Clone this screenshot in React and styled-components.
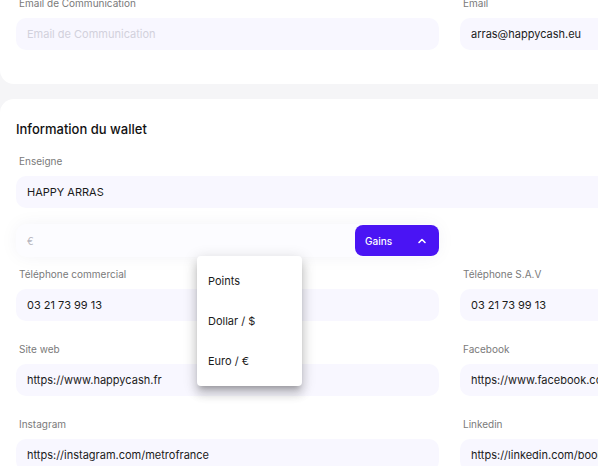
import styled, { createGlobalStyle } from "styled-components";

const GlobalStyle = createGlobalStyle`
  body {
    margin: 0;
    background: #f5f5f7;
    font-family: "Inter", "Liberation Sans", sans-serif;
    overflow: hidden;
  }
`;

const Page = styled.div`
  display: flex;
  flex-direction: column;
  gap: 15px;
  width: 900px;
  margin-top: -24px;
`;

const Card = styled.section`
  background: #ffffff;
  border-radius: ${(p) => (p.$top ? "0 0 14px 14px" : "14px 14px 0 0")};
  padding: ${(p) => (p.$top ? "20px 16px 34px" : "21px 16px 40px")};
`;

const Title = styled.h2`
  margin: 0 0 16px;
  font-size: 13px;
  line-height: 18px;
  font-weight: 500;
  color: #111111;
`;

const Grid = styled.div`
  display: grid;
  grid-template-columns: 423px 423px;
  column-gap: 21px;
  row-gap: 21px;
`;

const Field = styled.div`
  display: flex;
  flex-direction: column;
  grid-column: ${(p) => (p.$wide ? "1 / -1" : "auto")};
`;

const Label = styled.label`
  font-size: 10px;
  line-height: 14px;
  color: #7a7a7a;
  padding-left: 3px;
  margin-bottom: 8px;
`;

const Input = styled.div`
  height: 32px;
  display: flex;
  align-items: center;
  padding: 0 11px;
  border-radius: 10px;
  background: #f8f7ff;
  font-size: 11px;
  color: ${(p) => (p.$placeholder ? "#d2d1dc" : "#1b1b1b")};
  white-space: nowrap;
  overflow: hidden;
`;

const CurrencyRow = styled.div`
  position: relative;
  grid-column: 1 / -1;
  width: 423px;
  box-sizing: border-box;
  height: 33px;
  margin: -5px 0 -11px;
  display: flex;
  align-items: center;
  justify-content: space-between;
  padding-left: 11px;
  border-radius: 10px;
  background: #fcfcff;
  box-shadow: 0 0 18px rgba(40, 30, 90, 0.05);
  font-size: 10px;
  color: #b5b5bd;
`;

const GainsButton = styled.button`
  width: 84px;
  height: 31px;
  display: flex;
  align-items: center;
  justify-content: space-between;
  padding: 0 12px 0 10px;
  border: none;
  border-radius: 8px;
  background: #4a14f4;
  color: #ffffff;
  font-family: inherit;
  font-size: 10px;
  font-weight: 500;
`;

const Menu = styled.ul`
  position: absolute;
  left: 181px;
  top: 32px;
  width: 105px;
  margin: 0;
  padding: 5px 0;
  list-style: none;
  background: #ffffff;
  border-radius: 4px;
  box-shadow: 0 5px 5px -3px rgba(0, 0, 0, 0.2),
    0 8px 10px 1px rgba(0, 0, 0, 0.14), 0 3px 14px 2px rgba(0, 0, 0, 0.12);
  z-index: 2;
`;

const MenuItem = styled.li`
  height: 40px;
  display: flex;
  align-items: center;
  padding-left: 11px;
  font-size: 11px;
  color: #1b1b1b;
`;

function ChevronUp() {
  return (
    <svg width="10" height="10" viewBox="0 0 10 10" fill="none">
      <path
        d="M2 6.5L5 3.5L8 6.5"
        stroke="#fff"
        strokeWidth="1.6"
        strokeLinecap="round"
        strokeLinejoin="round"
      />
    </svg>
  );
}

const fields = [
  ["Téléphone commercial", "03 21 73 99 13"],
  ["Téléphone S.A.V", "03 21 73 99 13"],
  ["Site web", "https://www.happycash.fr"],
  ["Facebook", "https://www.facebook.com/happycash"],
  ["Instagram", "https://instagram.com/metrofrance"],
  ["Linkedin", "https://linkedin.com/booking"],
];

export default function App() {
  return (
    <>
      <GlobalStyle />
      <Page>
        <Card $top>
          <Grid>
            <Field>
              <Label>Email de Communication</Label>
              <Input $placeholder>Email de Communication</Input>
            </Field>
            <Field>
              <Label>Email</Label>
              <Input>arras@happycash.eu</Input>
            </Field>
          </Grid>
        </Card>

        <Card>
          <Title>Information du wallet</Title>
          <Grid>
            <Field $wide>
              <Label>Enseigne</Label>
              <Input>HAPPY ARRAS</Input>
            </Field>
            <CurrencyRow>
              €
              <GainsButton>
                Gains
                <ChevronUp />
              </GainsButton>
              <Menu>
                <MenuItem>Points</MenuItem>
                <MenuItem>Dollar / $</MenuItem>
                <MenuItem>Euro / €</MenuItem>
              </Menu>
            </CurrencyRow>
            {fields.map(([label, value]) => (
              <Field key={label}>
                <Label>{label}</Label>
                <Input>{value}</Input>
              </Field>
            ))}
          </Grid>
        </Card>
      </Page>
    </>
  );
}
